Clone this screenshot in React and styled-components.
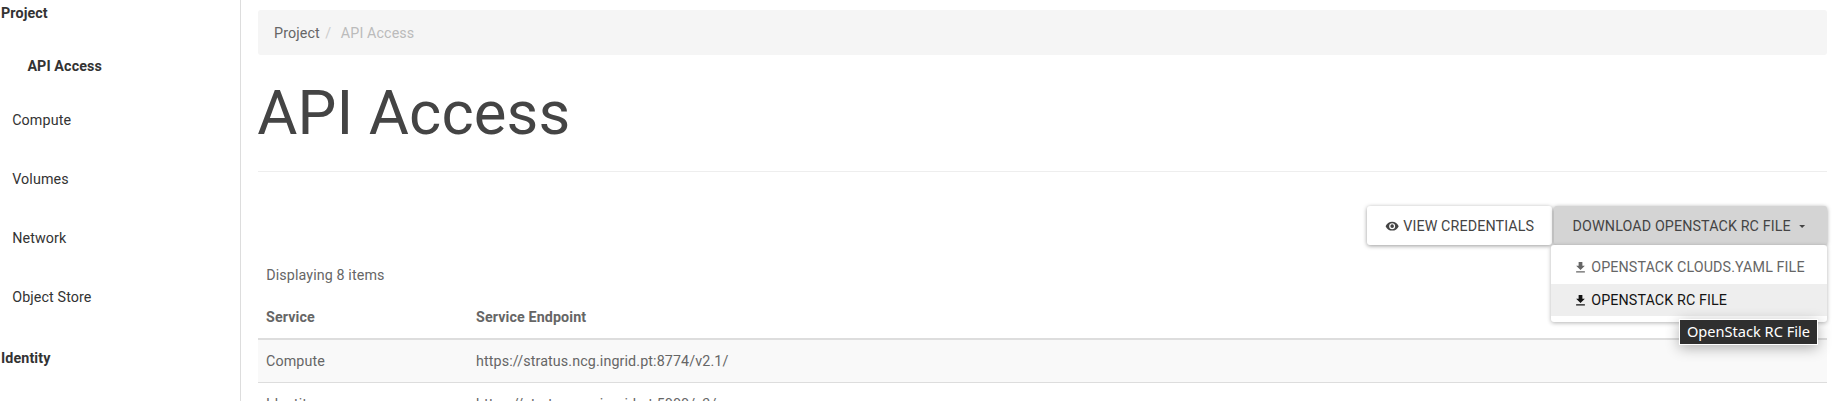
import React from "react";
import styled, { createGlobalStyle } from "styled-components";

const GlobalStyle = createGlobalStyle`
  * { box-sizing: border-box; }
  body {
    margin: 0;
    overflow: hidden;
    background: #fff;
    color: #666;
    font-family: Roboto, "Liberation Sans", sans-serif;
    font-size: 14.3px;
    line-height: 26px;
    letter-spacing: 0.11px;
  }
`;

const Page = styled.div`
  display: flex;
  height: 401px;
  overflow: hidden;
`;

const Sidebar = styled.nav`
  flex: none;
  width: 241px;
  border-right: 1px solid #ddd;
  color: #333;
`;

const NavHeading = styled.div`
  padding-left: 1px;
  font-weight: 700;
`;

const NavList = styled.div`
  display: flex;
  flex-direction: column;
  padding: 27px 0 35px 12.2px;
`;

const NavCurrent = styled.div`
  padding: 0 0 28px 15.2px;
  font-weight: 700;
`;

const NavGroup = styled.div`
  height: 59px;

  &:last-child { height: 26px; }
`;

const Main = styled.main`
  flex: 1;
  padding: 10px 7px 0 17px;
`;

const Breadcrumb = styled.div`
  display: flex;
  align-items: center;
  height: 45px;
  padding: 1px 16px 0;
  border-radius: 3px;
  background: #f5f5f5;
`;

const Separator = styled.span`
  padding: 0 9.5px 0 5.5px;
  color: #ccc;
`;

const Current = styled.span`
  color: #bbb;
`;

const Title = styled.h1`
  height: 117px;
  margin: 0;
  padding-top: 24px;
  border-bottom: 1px solid #eee;
  color: #444;
  font-size: 61.6px;
  font-weight: 400;
  line-height: 68px;
  text-indent: -0.7px;
`;

const Actions = styled.div`
  display: flex;
  justify-content: flex-end;
  gap: 2px;
  margin-top: 34px;
`;

const Button = styled.button`
  display: flex;
  align-items: center;
  width: ${(p) => p.$width}px;
  height: 39px;
  padding: 1px 0 0 ${(p) => (p.$open ? 18.6 : 18)}px;
  border: 0;
  border-radius: 3px;
  background: ${(p) => (p.$open ? "#d4d4d4" : "#fff")};
  box-shadow: 0 1px 4px rgba(0, 0, 0, 0.4);
  color: #444;
  font: inherit;
  letter-spacing: inherit;
  white-space: nowrap;
  text-transform: uppercase;
`;

const Dropdown = styled.div`
  position: relative;
`;

const Menu = styled.div`
  position: absolute;
  top: 39px;
  right: 0;
  width: 276px;
  height: 77px;
  padding-top: 6px;
  border-radius: 3px;
  background: #fff;
  box-shadow: 0 1px 4px rgba(0, 0, 0, 0.3);
  text-transform: uppercase;
`;

const MenuItem = styled.div`
  display: flex;
  align-items: center;
  height: ${(p) => (p.$active ? 32 : 33)}px;
  padding: 0 0 ${(p) => (p.$active ? 0 : 1)}px 22px;
  background: ${(p) => (p.$active ? "#eee" : "#fff")};
  color: ${(p) => (p.$active ? "#141414" : "#666")};
  white-space: nowrap;
`;

const Tooltip = styled.div`
  position: absolute;
  top: 113px;
  right: 9px;
  width: 139px;
  height: 26px;
  border: 1px solid #fff;
  background: #2f2f2f;
  box-shadow: 0 3px 14px rgba(0, 0, 0, 0.3);
  color: #fff;
  font-family: "Noto Sans", sans-serif;
  font-size: 14.6px;
  line-height: 23px;
  letter-spacing: 0;
  text-align: center;
  white-space: nowrap;
`;

const Icon = styled.svg`
  flex: none;
  width: ${(p) => p.$size}px;
  height: ${(p) => p.$size}px;
  margin-right: ${(p) => p.$gap || 0}px;
  margin-left: ${(p) => p.$before || 0}px;
  fill: currentColor;
`;

const Count = styled.div`
  margin-top: 17px;
  padding-left: 8.2px;
`;

const Table = styled.div`
  margin-top: 7px;
`;

const Row = styled.div`
  display: grid;
  grid-template-columns: 210px 1fr;
  align-items: center;
  height: 43px;
  padding-left: 8px;
  border-bottom: 1px solid #ddd;
  background: ${(p) => (p.$striped ? "#f9f9f9" : "#fff")};
`;

const HeaderRow = styled(Row)`
  height: 45px;
  border-bottom-width: 2px;
  font-weight: 700;
`;

const EYE =
  "M12 9a3 3 0 0 0-3 3 3 3 0 0 0 3 3 3 3 0 0 0 3-3 3 3 0 0 0-3-3m0 8a5 5 0 0 1-5-5 5 5 0 0 1 5-5 5 5 0 0 1 5 5 5 5 0 0 1-5 5m0-12.500C7 4.500 2.730 7.610 1 12c1.730 4.390 6 7.500 11 7.500s9.270-3.110 11-7.500c-1.730-4.390-6-7.500-11-7.500z";
const DOWNLOAD = "M5 20h14v-2H5m14-9h-4V3H9v6H5l7 7 7-7z";
const CARET = "M7 10l5 5 5-5H7z";

const Glyph = ({ d, size = 14.3, gap, before }) => (
  <Icon viewBox="0 0 24 24" $size={size} $gap={gap} $before={before} aria-hidden="true">
    <path d={d} />
  </Icon>
);

const groups = ["Compute", "Volumes", "Network", "Object Store"];
const services = [
  ["Compute", "https://stratus.ncg.ingrid.pt:8774/v2.1/"],
  ["Identity", "https://stratus.ncg.ingrid.pt:5000/v3/"],
];

export default function App() {
  return (
    <>
      <GlobalStyle />
      <Page>
        <Sidebar>
          <NavHeading>Project</NavHeading>
          <NavList>
            <NavCurrent>API Access</NavCurrent>
            {groups.map((name) => (
              <NavGroup key={name}>{name}</NavGroup>
            ))}
          </NavList>
          <NavHeading>Identity</NavHeading>
        </Sidebar>
        <Main>
          <Breadcrumb>
            <span>Project</span>
            <Separator>/</Separator>
            <Current>API Access</Current>
          </Breadcrumb>
          <Title>API Access</Title>
          <Actions>
            <Button $width={185}>
              <Glyph d={EYE} gap={3.9} />
              View Credentials
            </Button>
            <Dropdown>
              <Button $width={273} $open>
                Download OpenStack RC File
                <Glyph d={CARET} before={4} />
              </Button>
              <Menu>
                <MenuItem>
                  <Glyph d={DOWNLOAD} size={15} gap={3.2} />
                  OpenStack clouds.yaml File
                </MenuItem>
                <MenuItem $active>
                  <Glyph d={DOWNLOAD} size={15} gap={3.2} />
                  OpenStack RC File
                </MenuItem>
              </Menu>
              <Tooltip>OpenStack RC File</Tooltip>
            </Dropdown>
          </Actions>
          <Count>Displaying 8 items</Count>
          <Table>
            <HeaderRow>
              <span>Service</span>
              <span>Service Endpoint</span>
            </HeaderRow>
            {services.map(([name, url], i) => (
              <Row key={name} $striped={i % 2 === 0}>
                <span>{name}</span>
                <span>{url}</span>
              </Row>
            ))}
          </Table>
        </Main>
      </Page>
    </>
  );
}
